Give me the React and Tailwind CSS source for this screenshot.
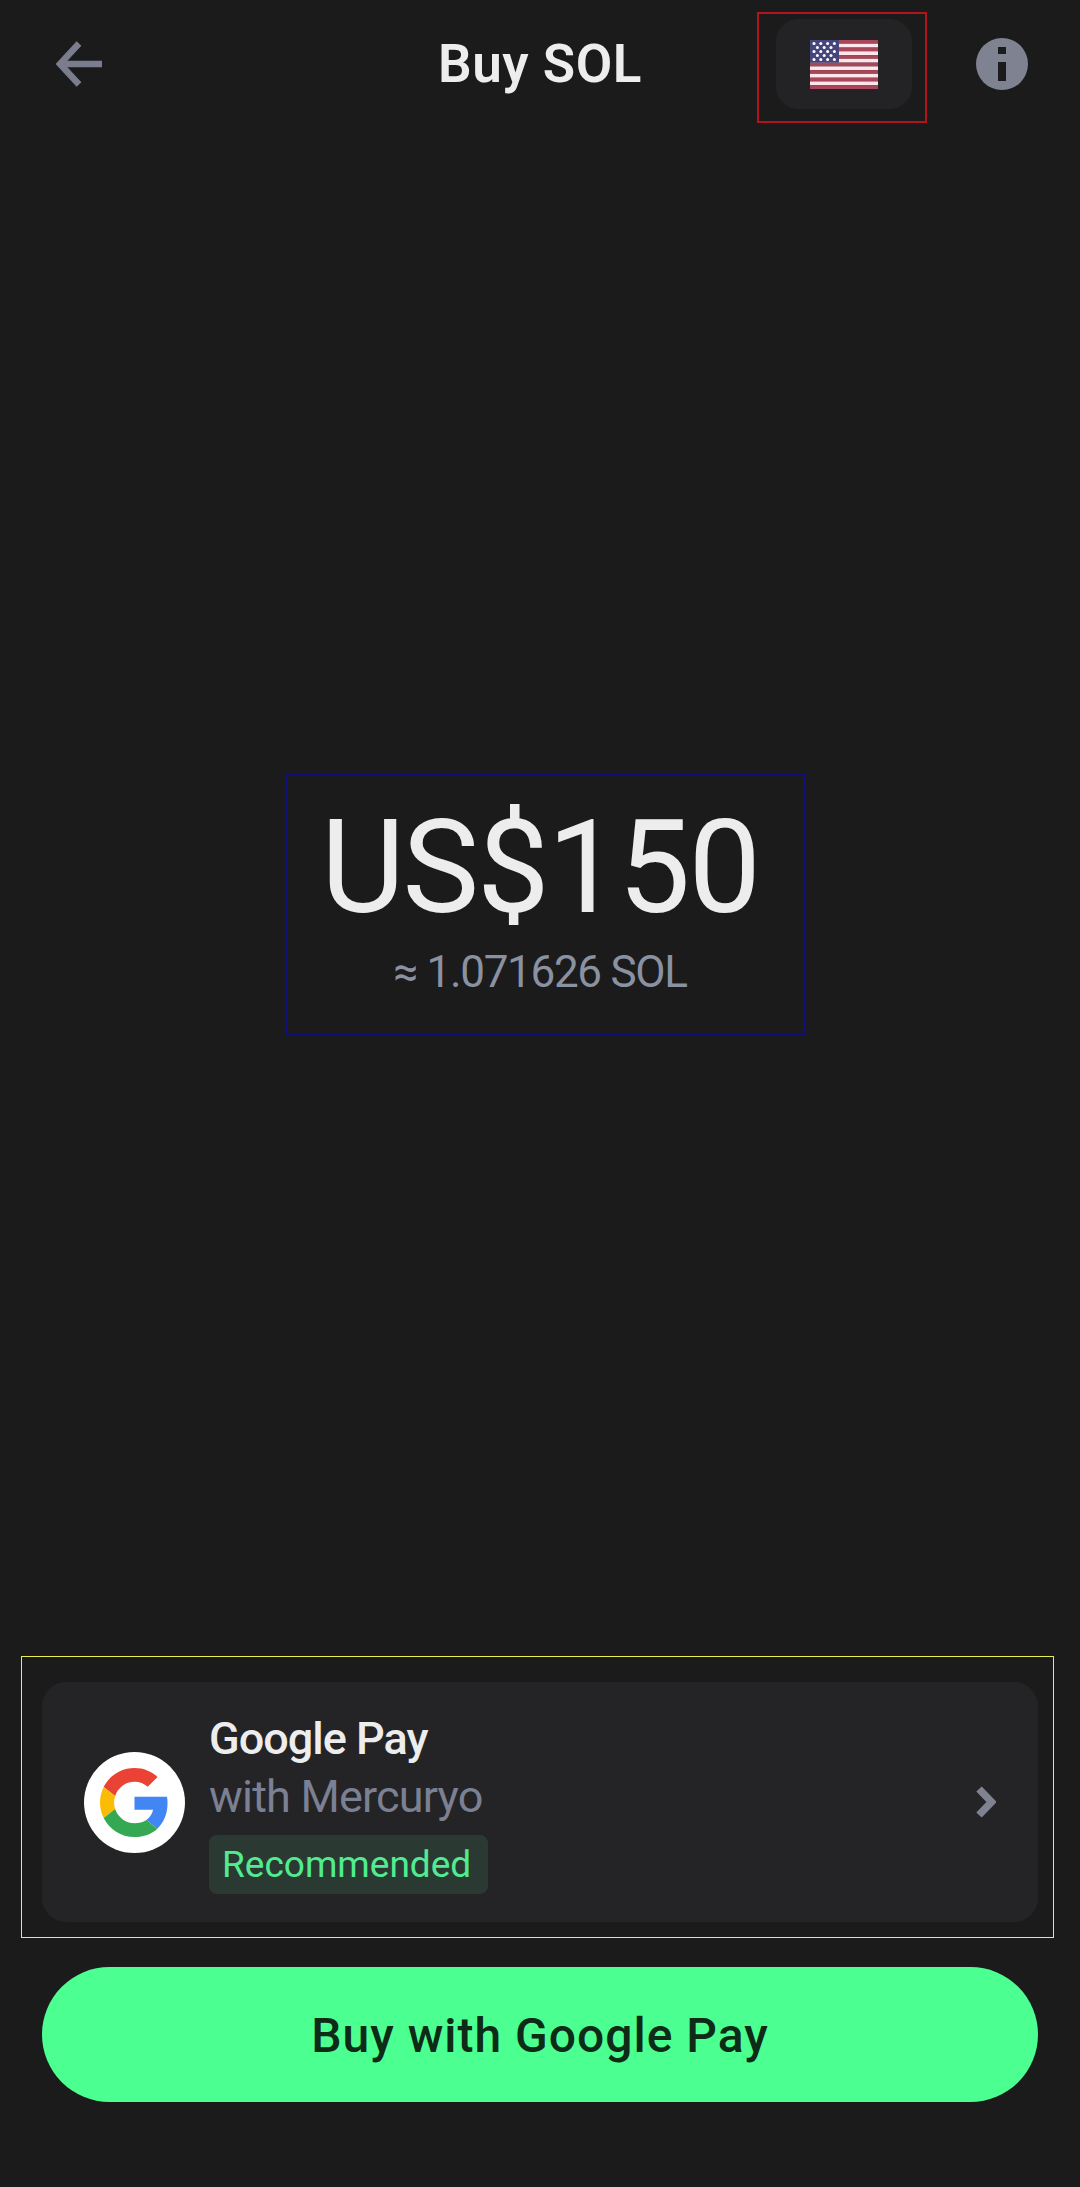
function BackArrow() {
  return (
    <svg width="48" height="46" viewBox="0 0 48 46" fill="none" stroke="#7a7d8e" strokeWidth="6.5">
      <path d="M47 23H6" />
      <path d="M24 2.5L5 23l19 20.5" />
    </svg>
  );
}

function InfoIcon() {
  return (
    <svg width="52" height="52" viewBox="0 0 52 52" className="block">
      <circle cx="26" cy="26" r="26" fill="#7f8291" />
      <rect x="22" y="9" width="8" height="7" fill="#1b1b1b" />
      <rect x="22" y="24" width="8" height="19" fill="#1b1b1b" />
    </svg>
  );
}

function Chevron() {
  return (
    <svg width="21" height="32" viewBox="0 0 21 32" fill="none" stroke="#7f8291" strokeWidth="7.5" className="shrink-0">
      <path d="M4 3l12.5 13L4 29" />
    </svg>
  );
}

function UsFlag() {
  const stripes = [0, 1, 2, 3, 4, 5, 6, 7, 8, 9, 10, 11, 12];
  const stars = [];
  for (let row = 0; row < 5; row++) {
    for (let col = 0; col < (row % 2 ? 3 : 4); col++) {
      stars.push([4 + col * 6.8 + (row % 2 ? 3.4 : 0), 3.4 + row * 4]);
    }
  }
  return (
    <svg width="68" height="49" viewBox="0 0 68 49" className="block">
      {stripes.map((i) => (
        <rect key={i} x="0" y={i * 3.77} width="68" height="3.77" fill={i % 2 ? "#ffe6ec" : "#a9475a"} />
      ))}
      <rect x="0" y="0" width="29" height="22.6" fill="#46467c" />
      {stars.map(([x, y], i) => (
        <circle key={i} cx={x} cy={y} r="1.5" fill="#ffffff" />
      ))}
    </svg>
  );
}

function GoogleG() {
  return (
    <svg width="69" height="69" viewBox="0 0 48 48">
      <path fill="#EA4335" d="M24 9.5c3.54 0 6.71 1.22 9.21 3.6l6.85-6.85C35.9 2.38 30.47 0 24 0 14.62 0 6.51 5.38 2.56 13.22l7.98 6.19C12.43 13.72 17.74 9.5 24 9.5z" />
      <path fill="#4285F4" d="M46.98 24.55c0-1.57-.15-3.09-.38-4.55H24v9.02h12.94c-.58 2.96-2.26 5.48-4.78 7.18l7.73 6c4.51-4.18 7.09-10.36 7.09-17.65z" />
      <path fill="#FBBC05" d="M10.53 28.59c-.48-1.45-.76-2.99-.76-4.59s.27-3.14.76-4.59l-7.98-6.19C.92 16.46 0 20.12 0 24c0 3.88.92 7.54 2.56 10.78l7.97-6.19z" />
      <path fill="#34A853" d="M24 48c6.48 0 11.93-2.13 15.89-5.81l-7.73-6c-2.15 1.45-4.92 2.3-8.16 2.3-6.26 0-11.57-4.22-13.47-9.91l-7.98 6.19C6.51 42.62 14.62 48 24 48z" />
    </svg>
  );
}

export default function App() {
  return (
    <div className="flex h-[2187px] w-[1080px] flex-col overflow-hidden bg-[#1b1b1b] font-['Roboto',sans-serif]">
      {/* Header */}
      <header className="mt-3 grid h-[111px] grid-cols-[1fr_auto_1fr] items-start">
        <div className="pl-[55px] pt-[29px]">
          <BackArrow />
        </div>
        <h1 className="mt-[22px] text-[53px] font-semibold leading-[60px] tracking-[0.5px] text-[#ededed]">Buy SOL</h1>
        <div className="flex items-start justify-end pr-[52px]">
          <div className="flex h-[111px] w-[170px] justify-center border-2 border-[#b3141c] pl-[3px] pt-[5px]">
            <div className="flex h-[90px] w-[136px] items-center justify-center rounded-[22px] bg-[#232325]">
              <UsFlag />
            </div>
          </div>
          <div className="ml-[49px] mt-[26px]">
            <InfoIcon />
          </div>
        </div>
      </header>

      {/* Amount */}
      <main className="flex-1">
        <div className="ml-[286px] mt-[650px] flex h-[263px] w-[519px] flex-col items-center border-2 border-[#10107a] pr-[11px]">
          <p className="mt-[18px] text-[129px] leading-[150px] tracking-[-2px] text-[#ededed]">US$150</p>
          <p className="mt-[3px] text-[44px] leading-[52px] tracking-[-1.3px] text-[#8a91a1]">≈ 1.071626 SOL</p>
        </div>
      </main>

      {/* Payment method */}
      <section className="ml-[21px] mr-[26px] h-[282px] border border-[#ecec55] pl-5 pr-[15px] pt-[25px]">
        <div className="flex h-[240px] items-center rounded-[24px] bg-[#242426] pl-[42px] pr-[42px]">
          <div className="flex h-[101px] w-[101px] shrink-0 items-center justify-center rounded-full bg-white">
            <GoogleG />
          </div>
          <div className="ml-6 flex-1">
            <p className="text-[45px] font-medium leading-[57px] tracking-[-1px] text-[#ededed]">Google Pay</p>
            <p className="pt-[1px] text-[45px] leading-[57px] tracking-[-0.8px] text-[#7b8092]">with Mercuryo</p>
            <span className="mt-[10px] block h-[59px] w-[279px] rounded-lg bg-[#2a3a32] px-[13px] text-[37px] leading-[59px] text-[#52ec90]">Recommended</span>
          </div>
          <Chevron />
        </div>
      </section>

      <button className="mx-[42px] mb-[85px] mt-[29px] h-[135px] rounded-full bg-[#4bff90] pt-[2px] text-[48px] font-medium tracking-[1px] text-[#0d2b17]">
        Buy with Google Pay
      </button>
    </div>
  );
}
